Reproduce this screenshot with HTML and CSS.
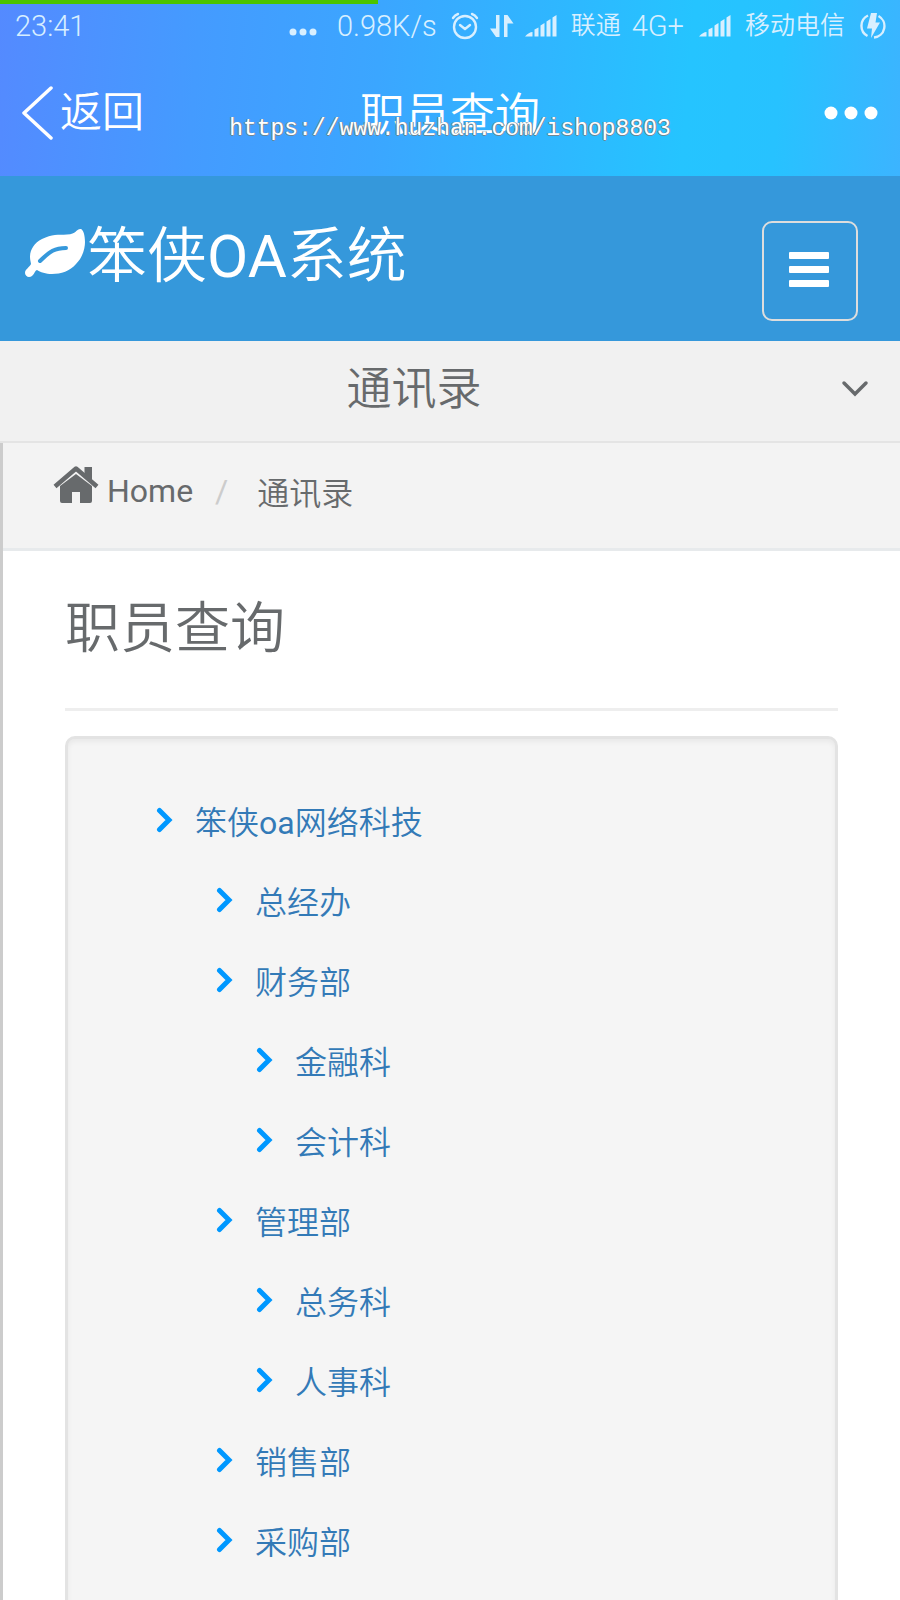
FILE: index.html
```html
<!DOCTYPE html>
<html lang="zh-CN">
<head>
<meta charset="UTF-8" />
<meta name="viewport" content="width=device-width, initial-scale=1" />
<title>职员查询</title>
<link rel="stylesheet" href="styles.css">
</head>
<body>

  <svg class="sprite" aria-hidden="true">
    <symbol id="signal" viewBox="0 0 32 24">
      <path d="M0 22.500Q4 18 7.500 18V22.500ZM9.500 15.500L13.500 13.500V22.500H9.500ZM15.500 11.500L19.500 9V22.500H15.500ZM21.500 7.500L25.500 5V22.500H21.500ZM27.500 3.500L31.500 1V22.500H27.500Z" fill="currentColor"/>
    </symbol>
    <symbol id="angle" viewBox="0 0 18 26">
      <path d="M3.500 3.500L13 13L3.500 22.500" fill="none" stroke="currentColor" stroke-width="5" stroke-linecap="round"/>
    </symbol>
  </svg>

  <div class="top">
    <div class="progress"></div>
    <div class="status">
      <span class="time">23:41</span>
      <svg class="dots-small" width="28" height="8" viewBox="0 0 28 8" fill="currentColor"><circle cx="4" cy="4" r="3.500"/><circle cx="14" cy="4" r="3.500"/><circle cx="24" cy="4" r="3.500"/></svg>
      <span class="speed">0.98K/s</span>
      <svg class="alarm" width="28" height="28" viewBox="0 0 28 28" fill="none" stroke="currentColor" stroke-width="2.400" stroke-linecap="round" stroke-linejoin="round"><circle cx="14" cy="15" r="11"/><path d="M9 13L14 17L19 13M2 6Q4 3 7 2M26 6Q24 3 21 2"/></svg>
      <svg class="transfer" width="24" height="24" viewBox="0 0 24 24" fill="currentColor"><path d="M6 1H9.500V23H6L0 14.500H6ZM14 23V1H17.500L23.500 9.500H17.500V23Z"/></svg>
      <svg class="signal" width="32" height="24"><use href="#signal"/></svg>
      <span class="operator">联通</span>
      <span class="network">4G+</span>
      <svg class="signal" width="32" height="24"><use href="#signal"/></svg>
      <span class="operator carrier">移动电信</span>
      <svg width="26" height="28" viewBox="0 0 26 28"><path d="M8 3.500A11.500 11.500 0 0 0 7.500 24M18.500 4A11.500 11.500 0 0 1 14 25.500" fill="none" stroke="currentColor" stroke-width="2.400"/><path d="M11 1H17L15.500 10.500H20L11 26L12 16.500H7Z" fill="currentColor"/></svg>
    </div>
    <div class="titlebar">
      <button type="button" class="back">
        <svg width="32" height="54" viewBox="0 0 32 54"><path d="M29 2L2 27L29 52" fill="none" stroke="currentColor" stroke-width="3.500" stroke-linecap="round" stroke-linejoin="round"/></svg>
        返回
      </button>
      <span class="title">职员查询</span>
      <button type="button" class="more" aria-label="更多">
        <svg width="54" height="14" viewBox="0 0 54 14" fill="currentColor"><circle cx="7" cy="7" r="6.500"/><circle cx="27" cy="7" r="6.500"/><circle cx="47" cy="7" r="6.500"/></svg>
      </button>
    </div>
    <div class="watermark">https://www.huzhan.com/ishop8803</div>
  </div>

  <header class="navbar">
    <a href="#" class="brand">
      <svg width="62" height="50" viewBox="0 0 62 50"><path d="M55 1C50 2 52 6 42 6.500C33 7 27 6 17 11C9 15 5 22 5 29C5 32 6 35 6 36C5 39 0 41 0 45C0 47 2 49 4 49C9 49 9 43 12 42C15 44 21 46 27 46C36 46 45 43 51 36C58 29 60 20 60 14C60 7 58 0 55 1Z" fill="currentColor"/><path d="M15 33C25 23 30 20 41 20" fill="none" stroke="#3598db" stroke-width="4" stroke-linecap="round"/></svg>
      <span class="brand-name">笨侠<span class="latin">OA</span>系统</span>
    </a>
    <button type="button" class="toggle" aria-label="菜单">
      <span></span><span></span><span></span>
    </button>
  </header>

  <button type="button" class="location">
    <span>通讯录</span>
    <svg width="28" height="18" viewBox="0 0 28 18"><path d="M3 3L14 14L25 3" fill="none" stroke="currentColor" stroke-width="3.500" stroke-linecap="round"/></svg>
  </button>

  <main class="content">
    <nav class="breadcrumb">
      <a href="#" class="home latin">
        <svg width="46" height="38" viewBox="0 0 46 38" fill="currentColor"><path d="M7 20L23 8L39 20V35Q39 37 37 37H27V26H19V37H9Q7 37 7 35Z"/><path d="M2 20.500L23 2.500L44 20.500" fill="none" stroke="currentColor" stroke-width="4.500" stroke-linejoin="round"/><path d="M31.500 1H39V16L31.500 9Z"/></svg>
        Home
      </a>
      <span class="slash latin">/</span>
      <a href="#">通讯录</a>
    </nav>

    <div class="page">
      <h1>职员查询</h1>
      <ul class="well tree">
        <li>
          <a href="#"><svg><use href="#angle"/></svg><span>笨侠<span class="latin">oa</span>网络科技</span></a>
          <ul class="departments">
            <li><a href="#"><svg><use href="#angle"/></svg>总经办</a></li>
            <li>
              <a href="#"><svg><use href="#angle"/></svg>财务部</a>
              <ul>
                <li><a href="#"><svg><use href="#angle"/></svg>金融科</a></li>
                <li><a href="#"><svg><use href="#angle"/></svg>会计科</a></li>
              </ul>
            </li>
            <li>
              <a href="#"><svg><use href="#angle"/></svg>管理部</a>
              <ul>
                <li><a href="#"><svg><use href="#angle"/></svg>总务科</a></li>
                <li><a href="#"><svg><use href="#angle"/></svg>人事科</a></li>
              </ul>
            </li>
            <li><a href="#"><svg><use href="#angle"/></svg>销售部</a></li>
            <li><a href="#"><svg><use href="#angle"/></svg>采购部</a></li>
          </ul>
        </li>
      </ul>
    </div>
  </main>

</body>
</html>
```
FILE: styles.css
```css
* {
  box-sizing: border-box;
}
body {
  margin: 0;
  font-family: Roboto, "Noto Sans CJK SC", sans-serif;
  font-size: 32px;
  font-weight: 350;
  color: #676a6c;
  background: #fff;
  min-height: 100vh;
  display: flex;
  flex-direction: column;
}
a {
  color: inherit;
  text-decoration: none;
}
button {
  font: inherit;
  color: inherit;
  background: none;
  border: none;
  padding: 0;
  cursor: pointer;
}
svg {
  flex: none;
}
.sprite {
  position: absolute;
  width: 0;
  height: 0;
}
.latin {
  font-weight: 400;
}

/* phone status bar and title */
.top {
  position: relative;
  color: #fff;
  background: linear-gradient(95deg, #548aff 0%, #449bff 22%, #3ba6ff 42%, #25c4ff 76%, #27c2ff 86%, #3cb4ff 100%);
}
.progress {
  width: 42%;
  height: 4px;
  background: #4bc400;
}
.status {
  display: flex;
  align-items: center;
  height: 44px;
  padding: 0 14px 0 15px;
  font-size: 29px;
  line-height: 44px;
  color: #d8efff;
}
.status .time {
  flex: 1;
}
.status .speed {
  margin: 0 14px 0 20px;
}
.status .dots-small {
  margin-top: 12px;
}
.status .transfer {
  margin: 0 11px;
}
.status .signal {
  margin-right: 14px;
}
.status .network {
  margin: 0 15px 0 11px;
}
.status .operator {
  font-size: 25px;
}
.status .carrier {
  margin-right: 15px;
}
.titlebar {
  display: grid;
  grid-template-columns: 1fr auto 1fr;
  align-items: center;
  height: 128px;
  padding: 2px 22px 0;
}
.back {
  display: flex;
  align-items: center;
  gap: 6px;
  font-size: 42px;
  line-height: 60px;
}
.title {
  padding-bottom: 4px;
  font-size: 45px;
}
.more {
  display: flex;
  justify-self: end;
}
.watermark {
  position: absolute;
  top: 114px;
  left: 0;
  right: 0;
  text-align: center;
  font-family: "Liberation Mono", monospace;
  font-size: 23px;
  line-height: 30px;
  color: #fff;
  text-shadow: 1px 0 #6d8796, 0 1px #6d8796, -1px 0 #6d8796;
}

.navbar {
  display: flex;
  justify-content: space-between;
  height: 165px;
  padding: 0 42px 0 25px;
  color: #fff;
  background: #3598db;
}
.brand {
  display: flex;
  align-items: center;
  height: 154px;
  font-size: 60px;
}
.brand-name {
  margin-bottom: 6px;
}
.toggle {
  display: flex;
  flex-direction: column;
  align-items: center;
  gap: 7px;
  width: 96px;
  height: 100px;
  margin-top: 45px;
  padding: 29px 2px 0 0;
  border: 2px solid #ddd;
  border-radius: 10px;
}
.toggle span {
  width: 40px;
  height: 7px;
  border-radius: 1px;
  background: #fff;
}
.location {
  display: flex;
  align-items: center;
  gap: 26px;
  height: 102px;
  padding: 0 31px 4px 13px;
  font-size: 45px;
  background: #f1f1f1;
  border-bottom: 2px solid #e4e4e4;
}
.location span {
  flex: 1;
  margin-bottom: 8px;
}

.content {
  flex: 1;
  border-left: 3px solid #ccc;
}
.breadcrumb {
  display: flex;
  align-items: center;
  height: 108px;
  padding: 0 50px 9px;
  background: #f3f3f3;
  border-bottom: 3px solid #e7eaec;
}
.home {
  display: flex;
  align-items: center;
  gap: 8px;
}
.home svg {
  margin-bottom: 12px;
}
.slash {
  margin: 0 29px 0 22px;
  color: #ccc;
}
.page {
  padding: 0 62px;
}
h1 {
  margin: 0 0 25px;
  padding: 37px 0 40px;
  font-size: 55px;
  font-weight: 350;
  line-height: 80px;
  border-bottom: 3px solid #eee;
}
.tree,
.tree ul {
  margin: 0;
  padding: 0;
  list-style: none;
}
.well {
  background: #f5f5f5;
  border: 3px solid #e3e3e3;
  border-radius: 10px;
  box-shadow: inset 0 3px 5px rgba(0,0,0,0.05);
}
.tree.well {
  padding: 41px 40px 43px 88px;
}
.tree .departments {
  padding-left: 60px;
}
.tree .departments ul {
  padding-left: 40px;
}
.tree a {
  display: flex;
  align-items: center;
  gap: 21px;
  height: 80px;
  color: #337ab7;
}
.tree svg {
  width: 18px;
  height: 26px;
  color: #0098ff;
}
```
